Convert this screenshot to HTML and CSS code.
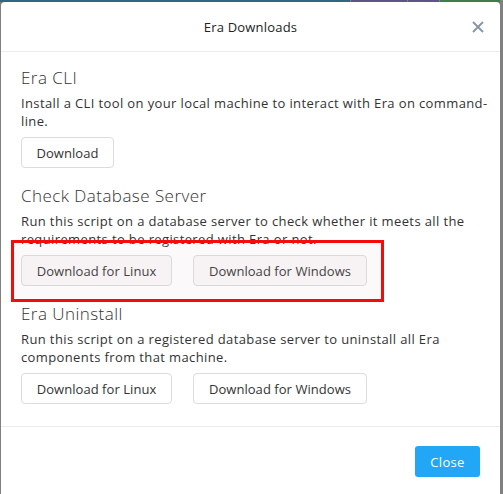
FILE: index.html
```html
<!doctype html>
<html>
<head>
<meta charset="utf-8">
<title>Era Downloads</title>
<link rel="stylesheet" href="styles.css">
</head>
<body>
<div class="strip">
	<span class="teal"></span>
	<span class="purple"></span>
	<span class="purple2"></span>
	<span class="green"></span>
</div>
<div class="modal">
	<div class="modal-header">
		<h1>Era Downloads</h1>
		<svg class="close-x" width="12" height="12" viewBox="0 0 12 12"><path d="M1 1L11 11M11 1L1 11" stroke="#8796ab" stroke-width="2" fill="none"/></svg>
	</div>
	<div class="modal-body">
		<div class="section">
			<h2>Era CLI</h2>
			<p>Install a CLI tool on your local machine to interact with Era on command-line.</p>
			<div class="btns">
				<button class="btn btn-cli">Download</button>
			</div>
		</div>
		<div class="section">
			<h2>Check Database Server</h2>
			<p>Run this script on a database server to check whether it meets all the requirements to be registered with Era or not.</p>
			<div class="btns marked">
				<button class="btn btn-linux">Download for Linux</button>
				<button class="btn btn-win">Download for Windows</button>
				<div class="highlight"></div>
			</div>
		</div>
		<div class="section">
			<h2>Era Uninstall</h2>
			<p>Run this script on a registered database server to uninstall all Era components from that machine.</p>
			<div class="btns">
				<button class="btn btn-linux">Download for Linux</button>
				<button class="btn btn-win">Download for Windows</button>
			</div>
		</div>
	</div>
	<div class="modal-footer">
		<button class="btn-close">Close</button>
	</div>
</div>
</body>
</html>
```
FILE: styles.css
```css
* {margin:0; padding:0; box-sizing:border-box;}

body {background:#808080; font-family:"Open Sans", "Liberation Sans", sans-serif; color:#333; height:494px; overflow:hidden;}

.strip {display:flex; height:2px; margin-right:3px;}
.strip span {display:block; height:2px;}
.teal {width:350px; background:#2f6783; margin-right:1px;}
.purple {width:56px; background:#5d5585; margin-right:1px;}
.purple2 {width:31px; background:#5d5585; margin-right:1px;}
.green {flex:1; background:#3f7d4f;}

.modal {background:#fff; margin:0 3px 0 1px; border-radius:4px 4px 0 0; height:492px;}

.modal-header {height:50px; border-bottom:1px solid #ececec; display:flex; align-items:center; justify-content:center; position:relative;}
.modal-header h1 {font-size:13px; font-weight:normal; color:#222; letter-spacing:0.2px;}
.close-x {position:absolute; right:16px; top:19px;}

.modal-body {padding:14px 8px 22px 20px; border-bottom:1px solid #ececec;}
.section {margin-bottom:16px;}
.section:last-child {margin-bottom:0;}
.section h2 {font-size:17px; font-weight:300; line-height:24px; color:#333; letter-spacing:0.45px; margin-bottom:4px;}
.section p {font-size:13px; letter-spacing:0.38px; line-height:18px; color:#333; margin-bottom:7px;}

.btns {display:flex; gap:21px; position:relative;}
.btn {height:31px; background:#fff; border:1px solid #dcdcdc; border-radius:4px; font-family:inherit; font-size:13px; letter-spacing:0.05px; color:#333; text-align:center;}
.btn-cli {width:93px;}
.btn-linux {width:151px;}
.btn-win {width:174px;}

.marked .btn {background:#faf8f9;}
.highlight {position:absolute; left:-10px; top:-15px; width:373px; height:62px; border:3px solid #f20d0d; background:rgba(225,195,205,0.1); pointer-events:none;}

.modal-footer {display:flex; justify-content:flex-end; padding:19px 20px;}
.btn-close {width:65px; height:31px; background:#22a6f6; color:#fff; border:none; border-radius:3px; font-family:inherit; font-size:13px; letter-spacing:0.3px;}
```
